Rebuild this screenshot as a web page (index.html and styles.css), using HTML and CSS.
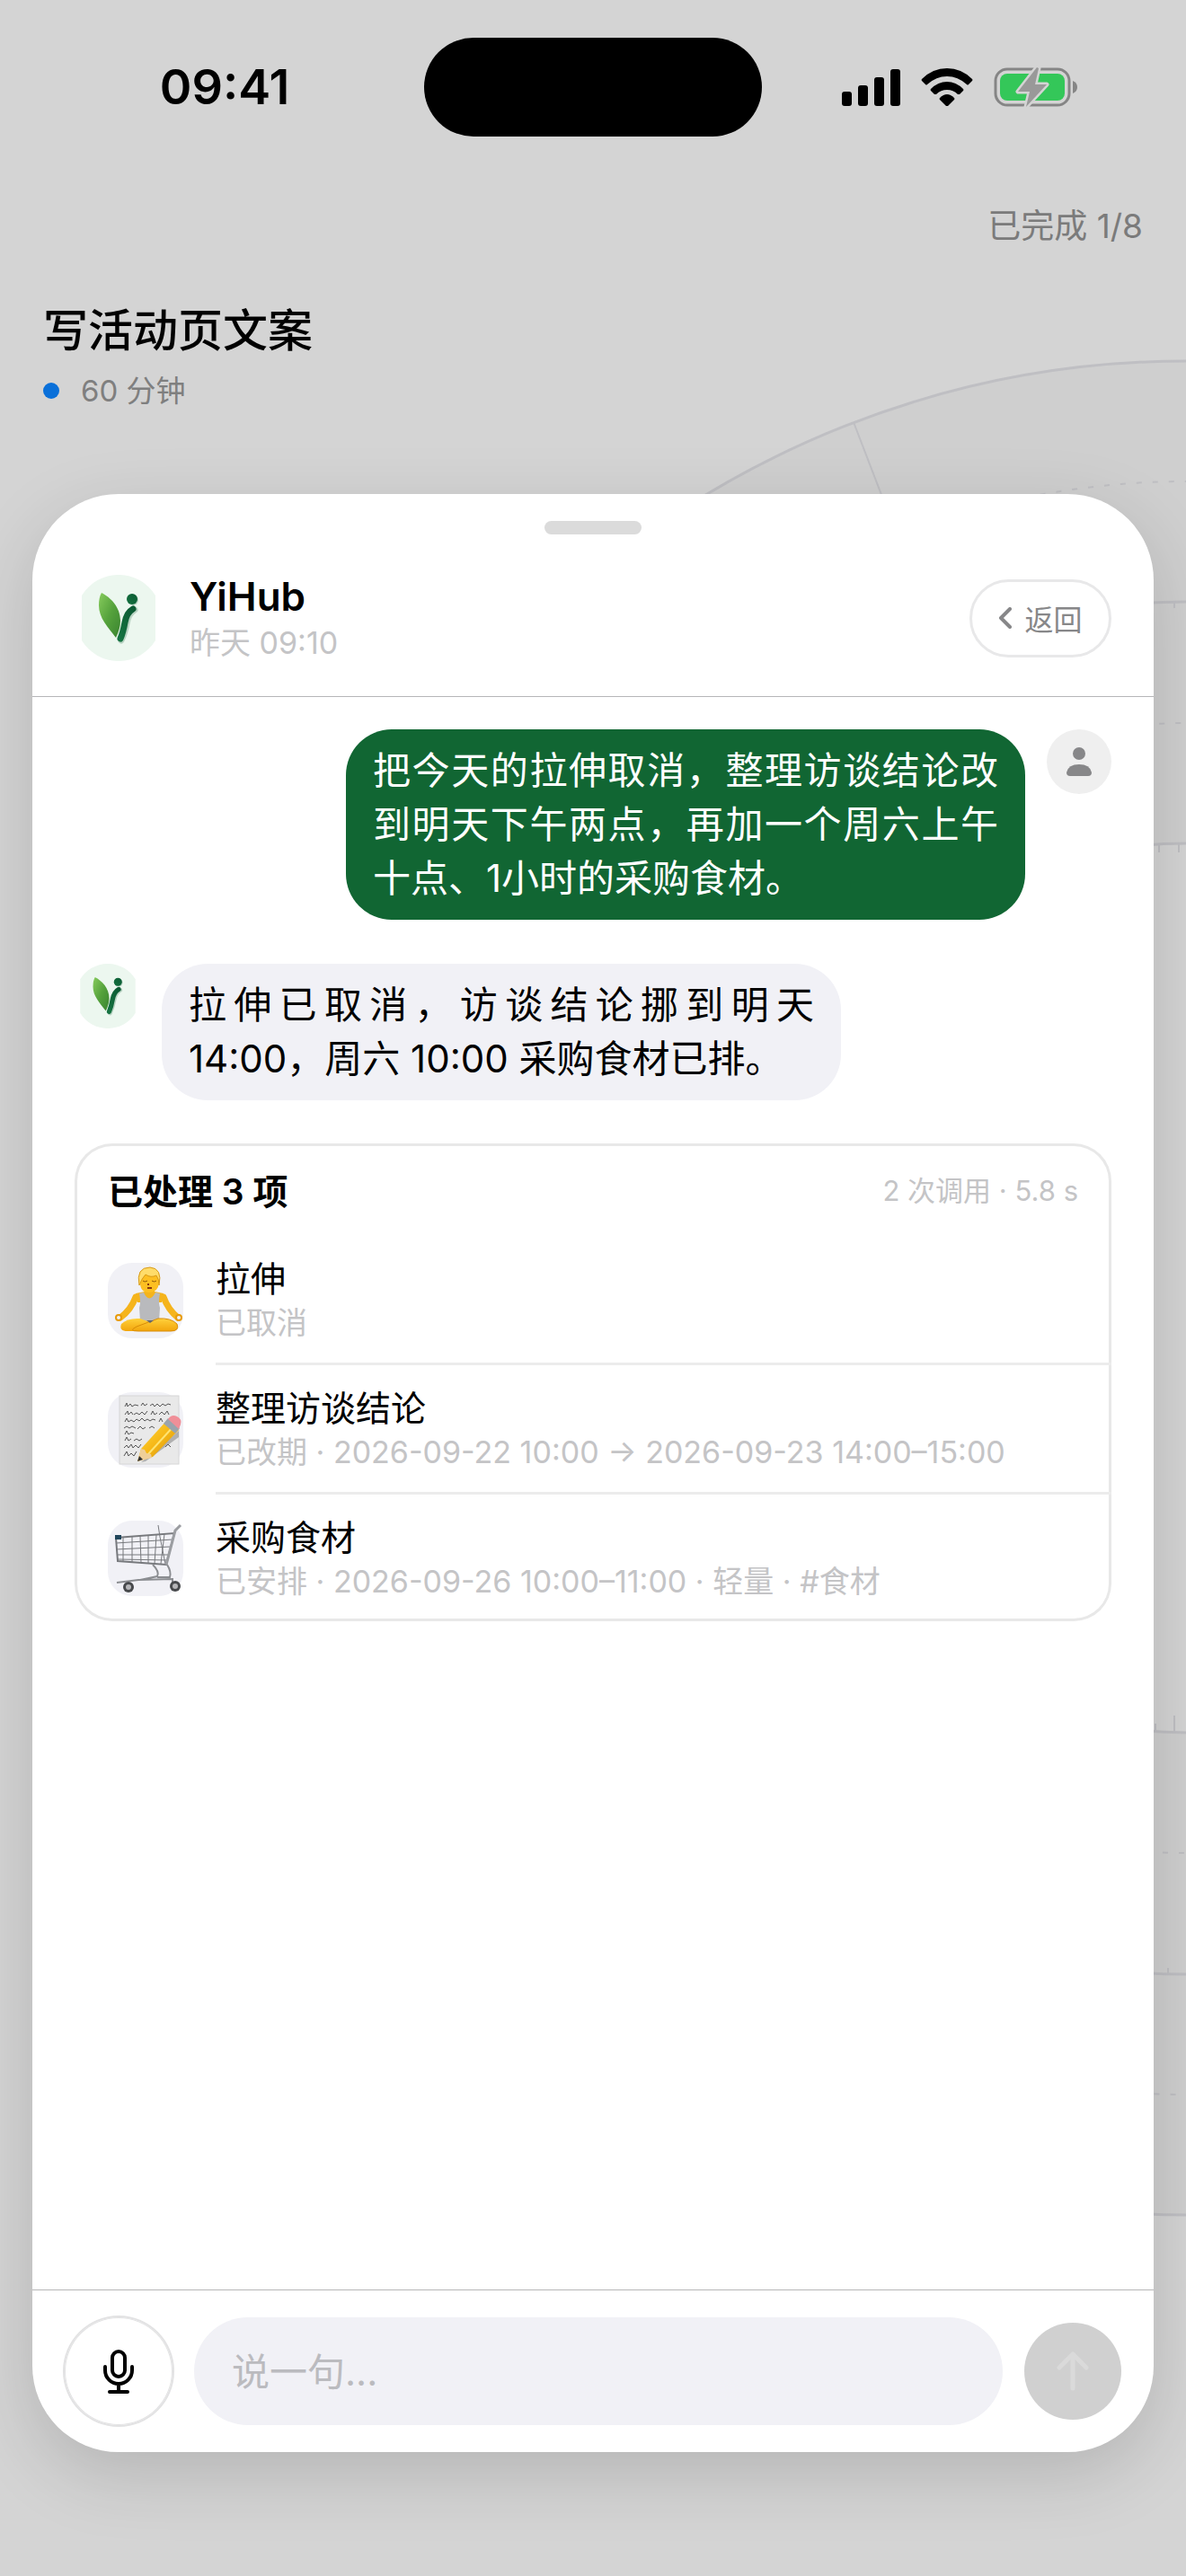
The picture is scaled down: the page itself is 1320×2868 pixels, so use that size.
FILE: index.html
```html
<!DOCTYPE html>
<html lang="zh-CN">
<head>
<meta charset="utf-8">
<meta name="viewport" content="width=device-width, initial-scale=1">
<title>YiHub</title>
<link rel="stylesheet" href="styles.css">
</head>
<body>
<svg class="defs" aria-hidden="true">
  <defs>
    <linearGradient id="leaf" x1="0" y1="0" x2="1" y2="1">
      <stop offset="0" stop-color="#86cb5c"/><stop offset="0.5" stop-color="#55a23c"/><stop offset="1" stop-color="#3a8430"/>
    </linearGradient>
    <linearGradient id="stem" x1="1" y1="0" x2="0" y2="1">
      <stop offset="0" stop-color="#0b5a33"/><stop offset="1" stop-color="#157341"/>
    </linearGradient>
    <linearGradient id="skin" x1="0" y1="0" x2="0" y2="1">
      <stop offset="0" stop-color="#ffd13b"/><stop offset="1" stop-color="#f2a50c"/>
    </linearGradient>
    <linearGradient id="pencil" x1="0" y1="0" x2="1" y2="1">
      <stop offset="0" stop-color="#ffdb45"/><stop offset="0.5" stop-color="#f6b817"/><stop offset="1" stop-color="#c98608"/>
    </linearGradient>
    <symbol id="logo" viewBox="0 0 82 96">
      <path fill="#ecf7ef" d="M0 23A48 48 0 0 1 82 23V73A48 48 0 0 1 0 73Z"/>
      <path fill="url(#leaf)" d="M22 20C32 25 43 36 43 51Q43 60 38 70C29 58 19 48 19 34Q19 25 22 20Z"/>
      <g fill="none" stroke="#b9d3c3" stroke-width="7" stroke-linecap="round" transform="translate(1 1)"><path d="M58 38Q51 42 49 53T43 72"/></g>
      <path d="M57 38Q50 42 48 53T43 71" fill="none" stroke="url(#stem)" stroke-width="7" stroke-linecap="round"/>
      <circle cx="57" cy="28" r="6" fill="#b9d3c3"/>
      <circle cx="56" cy="27" r="6" fill="url(#stem)"/>
    </symbol>
  </defs>
</svg>

<div class="screen">
  <header class="status">
    <div class="status-left"><time>09:41</time></div>
    <div class="island"></div>
    <div class="status-right">
      <svg width="65" height="41" viewBox="0 0 65 41" aria-hidden="true"><rect y="25" width="11" height="16" rx="3"/><rect x="18" y="18" width="11" height="23" rx="3"/><rect x="36" y="9" width="11" height="32" rx="3"/><rect x="54" width="11" height="41" rx="3"/></svg>
      <svg width="58" height="42" viewBox="0 0 58 42" aria-hidden="true"><path d="M1 12Q13 0 29 0T57 12Q58 13 57 14L53 18Q52 19 51 18Q41 9 29 9T7 18Q6 19 5 18L1 14Q0 13 1 12Z"/><path d="M11 23Q19 15 29 15T47 23Q48 24 47 25L43 29Q42 29 41 29Q36 24 29 24T17 29Q16 29 15 29L11 25Q10 24 11 23Z"/><path d="M21 33Q25 29 29 29T37 33Q38 34 37 35L30 42Q29 42 28 42L21 35Q20 34 21 33Z"/></svg>
      <svg width="94" height="46" viewBox="0 0 94 46" aria-hidden="true">
        <rect x="2" y="3" width="82" height="40" rx="13" fill="none" stroke="#858585" stroke-width="3"/>
        <path d="M88 16Q93 18 93 23T88 30Z" fill="#858585"/>
        <rect x="7" y="8" width="72" height="30" rx="8" fill="#34c759"/>
        <path d="M48 1L27 28H40L36 45L59 20H46L50 2Z" fill="#999" stroke="#d4d4d4" stroke-width="5" stroke-linejoin="round" paint-order="stroke"/>
      </svg>
    </div>
  </header>

  <main class="day">
    <svg class="dial" viewBox="287 400 1033 2068" aria-hidden="true">
      <circle class="dial-band" cx="1320" cy="1434" r="764"/>
      <g class="dial-line">
        <circle cx="1320" cy="1434" r="1032"/>
        <circle cx="1320" cy="1434" r="764"/>
        <circle cx="1320" cy="1434" r="495"/>
        <path d="M950 470L1143 973"/>
        <path class="dial-tick" d="M1290 939V949M1312 939V949M1307 671V677M1286 1928V1919M1307 1928V1910M1300 2197V2191"/>
      </g>
      <g class="dial-dash">
        <circle cx="1320" cy="1434" r="898"/>
        <circle cx="1320" cy="1434" r="629"/>
      </g>
    </svg>
    <p class="progress">已完成 1/8</p>
    <h1 class="task">写活动页文案</h1>
    <p class="duration"><span class="dot"></span>60 分钟</p>
  </main>

  <section class="sheet" role="dialog" aria-label="YiHub">
    <div class="grabber"></div>
    <header class="sheet-head">
      <svg class="logo"><use href="#logo"/></svg>
      <div class="who">
        <h2>YiHub</h2>
        <p>昨天 09:10</p>
      </div>
      <button class="back" type="button">
        <svg width="15" height="24" viewBox="0 0 15 24" aria-hidden="true"><path d="M13 2L3 12L13 22" fill="none" stroke="currentColor" stroke-width="4" stroke-linecap="round" stroke-linejoin="round"/></svg>
        返回
      </button>
    </header>

    <div class="chat">
      <div class="msg mine">
        <p class="bubble">把今天的拉伸取消，整理访谈结论改到明天下午两点，再加一个周六上午十点、1小时的采购食材。</p>
        <span class="avatar"><svg width="28" height="32" viewBox="0 0 28 32" aria-hidden="true"><circle cx="14" cy="7" r="7"/><path d="M4 32Q0 32 0 28Q2 19 14 19T28 28Q28 32 24 32Z"/></svg></span>
      </div>
      <div class="msg">
        <svg class="logo-small"><use href="#logo"/></svg>
        <p class="bubble">拉伸已取消，访谈结论挪到明天14:00，周六 10:00 采购食材已排。</p>
      </div>

      <section class="card">
        <header class="card-head">
          <h3>已处理 3 项</h3>
          <span>2 次调用 · 5.8 s</span>
        </header>
        <ul class="items">
          <li>
            <span class="tile"><svg viewBox="0 0 84 84" aria-hidden="true">
              <path d="M31 38Q26 52 14 61M62 38Q67 52 78 61" fill="none" stroke="#f5b41c" stroke-width="7" stroke-linecap="round"/>
              <circle cx="12" cy="61" r="3" fill="#f1f1f6" stroke="#e89b0a" stroke-width="2"/><circle cx="79" cy="61" r="3" fill="#f1f1f6" stroke="#e89b0a" stroke-width="2"/>
              <path d="M41 27H52V38H41Z" fill="#eda414"/>
              <path d="M31 34L41 32H52L62 34L60 44H33Z" fill="#f5b41c"/>
              <path d="M35 34L40 33Q46 46 53 33L58 34Q56 44 58 50L57 65H36L35 50Q37 44 35 34Z" fill="#b9babd"/>
              <path d="M15 68Q22 61 36 62L58 70Q70 75 60 76H22Q12 76 15 68Z" fill="url(#skin)"/>
              <path d="M77 68Q70 61 56 62L32 71Q22 76 34 76H70Q80 76 77 68Z" fill="url(#skin)" stroke="#d88c08" stroke-width="1"/>
              <path d="M43 64H51L47 67Z" fill="#66686c"/>
              <path d="M36 16Q36 8 46 8T57 16V22Q56 33 46 33T36 22Z" fill="#fdbf22"/>
              <path d="M35 25Q31 5 47 5Q61 6 57 25Q57 18 54 14Q48 17 42 13Q38 17 35 25Z" fill="#ffdc6a" stroke="#d99a14" stroke-width="1"/>
              <path d="M39 20Q41 22 44 20M49 20Q52 22 54 20" fill="none" stroke="#8f5a0a" stroke-width="1"/><path d="M45 23V25M44 28H49" stroke="#8c3a10" stroke-width="2"/>
            </svg></span>
            <div class="item"><h4>拉伸</h4><p>已取消</p></div>
          </li>
          <li>
            <span class="tile"><svg viewBox="0 0 84 84" aria-hidden="true">
              <rect x="13" y="4" width="66" height="76" fill="#e9e9e9" stroke="#d6d6d6"/>
              <g fill="none" stroke="#555" stroke-width="1"><path d="M19 16l2-4 1 4 3-3 2 3 3-2 4 1M37 15l2-3 2 3 3-2M47 15l3-2 2 3 3-3 3 3 3-3 3 2 3-2 3 1"/><path d="M19 25l3-4 1 4 3-3 2 3M29 25l3-2 3 2 3-3 3 3 3-4M48 25l2-4 2 4 3-2M57 25l3-3 3 3 3-4 2 4"/><path d="M19 33l2-4 2 4 3-2 3 2 3-3 3 2 3-3 3 3 3-2 3 2 3-2 3 1M57 33l2-4 2 4"/><path d="M18 40l3-2 3 2 3-2 4 2M33 41l3-3 3 3 3-2M46 40l3-2 3 2"/><path d="M19 47l2-4 2 4 3-2 3 1"/><path d="M19 54l2-4 2 4 3-2M29 54l3-2 3 2 3-2"/><path d="M18 62l3-3 2 3 3-4 2 4 3-3 3 3 3-4M64 61l3-3 3 3"/><path d="M18 71l3-5 2 5 3-3 3 3 3-5"/></g>
              <path d="M37 78L79 43V50L42 77Z" fill="#777" opacity=".5"/>
              <path d="M33 77L37 63L66 31L79 42L50 72Z" fill="url(#pencil)"/>
              <path d="M44 70L74 37" stroke="#ffe472" stroke-width="2"/>
              <path d="M33 77L37 63L41 64L43 68L48 69L49 73Z" fill="#efcf98"/><path d="M33 77L35 71L39 75Z" fill="#333"/>
              <path d="M62 35L67 29L80 40L75 46Z" fill="#9aa4ad"/>
              <path d="M67 30Q71 24 77 27T81 36L79 41Z" fill="#f08f98"/>
            </svg></span>
            <div class="item"><h4>整理访谈结论</h4><p>已改期 · 2026-09-22 10:00 → 2026-09-23 14:00–15:00</p></div>
          </li>
          <li>
            <span class="tile"><svg viewBox="0 0 84 84" aria-hidden="true">
              <g fill="none" stroke="#77797d" stroke-width="1"><path d="M9 19L74 14L65 49L11 45Z" stroke-width="2"/><path d="M9 25L72 21M9 32L70 29M10 38L68 38M11 43L67 44M17 19V46M27 18V46M36 17L37 47M45 16V47M54 16L52 48M63 15L59 48"/><path d="M56 5L58 18L64 48"/></g>
              <path d="M81 5L75 11L65 49" fill="none" stroke="#9b9da1" stroke-width="3"/>
              <path d="M50 49Q58 57 55 62L36 66M66 49Q71 57 69 63H55M10 69L34 66L72 65V70" fill="none" stroke="#8b8d91" stroke-width="2"/>
              <rect x="8" y="16" width="7" height="5" fill="#21465b"/>
              <circle cx="23" cy="74" r="6" fill="#47494c"/><circle cx="23" cy="74" r="3" fill="#b5b5b8"/>
              <circle cx="75" cy="73" r="6" fill="#47494c"/><circle cx="75" cy="73" r="3" fill="#b5b5b8"/>
            </svg></span>
            <div class="item"><h4>采购食材</h4><p>已安排 · 2026-09-26 10:00–11:00 · 轻量 · #食材</p></div>
          </li>
        </ul>
      </section>
    </div>

    <form class="composer">
      <button class="mic" type="button" aria-label="语音">
        <svg width="34" height="50" viewBox="0 0 34 50" aria-hidden="true"><g fill="none" stroke="#000" stroke-width="4" stroke-linecap="round"><rect x="10" y="3" width="14" height="28" rx="7"/><path d="M2 20V24A15 15 0 0 0 32 24V20M17 39V47M7 48H27"/></g></svg>
      </button>
      <input class="say" type="text" placeholder="说一句..." aria-label="说一句">
      <button class="send" type="submit" aria-label="发送" disabled>
        <svg width="36" height="44" viewBox="0 0 36 44" aria-hidden="true"><path d="M18 41V4M3 18L18 3L33 18" fill="none" stroke="#dadada" stroke-width="5" stroke-linecap="round" stroke-linejoin="round"/></svg>
      </button>
    </form>
  </section>
</div>
</body>
</html>
```

FILE: styles.css
```css
* { box-sizing: border-box; }

body, h1, h2, h3, h4, p, ul { margin: 0; padding: 0; }

body {
  background: #d4d4d4;
  color: #000;
  font-family: Inter, "Noto Sans CJK SC", sans-serif;
}

button, input { font: inherit; border: 0; padding: 0; margin: 0; }

.defs { position: absolute; width: 0; height: 0; }

.screen {
  position: relative;
  min-height: 100vh;
  overflow: hidden;
}

/* Status bar */
.status {
  display: grid;
  grid-template-columns: 1fr 376px 1fr;
  align-items: center;
  padding: 42px 0 0;
}
.status-left {
  padding-left: 28px;
  text-align: center;
  font-size: 54px;
  line-height: 60px;
  font-weight: 600;
}
.island { height: 110px; border-radius: 55px; background: #000; }
.status-right {
  display: flex;
  align-items: center;
  justify-content: center;
  gap: 23px;
  padding-right: 32px;
}

/* Day view behind the sheet */
.day { padding: 72px 48px 0; }
.dial {
  position: absolute;
  top: 400px;
  right: 0;
  width: 1033px;
  height: 2068px;
}
.dial-band { fill: none; stroke: #cfcfcf; stroke-width: 537px; }
.dial-line { fill: none; stroke: #bfbfc3; stroke-width: 3px; }
.dial-line path { stroke-width: 2px; }
.dial-dash { fill: none; stroke: #bfbfc3; stroke-width: 2px; stroke-dasharray: 6 12; }
.progress {
  position: relative;
  text-align: right;
  font-size: 37px;
  line-height: 56px;
  color: #7b7b7b;
}
.task {
  position: relative;
  margin-top: 52px;
  font-size: 50px;
  line-height: 72px;
  font-weight: 500;
}
.duration {
  position: relative;
  display: flex;
  align-items: center;
  gap: 24px;
  margin-top: 7px;
  font-size: 33px;
  line-height: 48px;
  color: #7f7f7f;
}
.dot { width: 18px; height: 18px; border-radius: 50%; background: #0a70d9; }

/* Conversation sheet */
.sheet {
  position: absolute;
  inset: 550px 36px 138px;
  display: flex;
  flex-direction: column;
  border-radius: 96px;
  background: #fff;
  box-shadow: 0 24px 80px rgba(0, 0, 0, .15);
}
.grabber {
  width: 108px;
  height: 15px;
  margin: 30px auto 0;
  border-radius: 8px;
  background: #dbdbdb;
}
.sheet-head {
  display: flex;
  align-items: center;
  height: 181px;
  padding: 6px 47px 0 55px;
  border-bottom: 1px solid #b6b6b8;
}
.logo { width: 82px; height: 96px; }
.who { flex: 1; padding-left: 38px; }
.who h2 { font-size: 44px; line-height: 56px; font-weight: 600; }
.who p { font-size: 34px; line-height: 48px; color: #c4c4c6; }
.back {
  display: flex;
  align-items: center;
  justify-content: center;
  gap: 14px;
  width: 158px;
  height: 87px;
  border: 3px solid #e8e8e9;
  border-radius: 44px;
  background: #fff;
  color: #878789;
  font-size: 32px;
}

/* Messages */
.chat {
  flex: 1;
  padding: 36px 47px 0;
}
.msg {
  display: flex;
  align-items: flex-start;
  gap: 29px;
  margin-bottom: 48px;
  padding-left: 6px;
}
.mine { justify-content: flex-end; gap: 24px; margin-bottom: 49px; }
.bubble {
  width: 756px;
  padding: 16px 30px;
  border-radius: 51px;
  background: #f1f1f6;
  font-size: 42px;
  line-height: 60px;
  text-align: justify;
}
.mine .bubble { background: #116633; color: #fff; }
.avatar {
  display: flex;
  align-items: center;
  justify-content: center;
  width: 72px;
  height: 72px;
  border-radius: 50%;
  background: #efefef;
  fill: #878789;
}
.logo-small { width: 62px; height: 72px; }

/* Result card */
.card {
  border-radius: 42px;
  box-shadow: inset 0 0 0 3px #e8e8e8;
}
.card-head {
  display: flex;
  align-items: center;
  justify-content: space-between;
  height: 103px;
  padding: 0 37px 2px;
}
.card-head h3 { font-size: 39px; font-weight: 600; }
.card-head span { font-size: 31px; color: #c4c4c6; }
.items { list-style: none; }
.items li {
  display: flex;
  align-items: center;
  gap: 36px;
  padding-left: 37px;
}
.tile {
  width: 84px;
  height: 84px;
  border-radius: 27px;
  background: #f1f1f6;
}
.tile svg { display: block; }
.item {
  flex: 1;
  display: flex;
  flex-direction: column;
  gap: 4px;
  padding: 24px 0 23px;
  border-bottom: 3px solid #ececec;
}
.items li:last-child .item { border-bottom: 0; }
.item h4 { font-size: 39px; line-height: 48px; font-weight: 400; }
.item p { font-size: 34px; line-height: 42px; color: #c4c4c6; }

/* Composer */
.composer {
  display: flex;
  align-items: center;
  gap: 24px;
  padding: 30px 36px;
  border-top: 1px solid #b6b6b8;
}
.mic, .send {
  display: flex;
  align-items: center;
  justify-content: center;
  flex: none;
  border-radius: 50%;
}
.mic {
  width: 120px;
  height: 120px;
  background: #fff;
  box-shadow: 0 0 0 2px #e2e2e3, inset 0 0 0 1px #e2e2e3;
}
.say {
  flex: 1;
  min-width: 0;
  height: 120px;
  padding: 0 42px;
  border-radius: 60px;
  background: #f1f1f6;
  font-size: 42px;
}
.say::placeholder { color: #bbbbbf; }
.send { width: 108px; height: 108px; background: #d0d0d0; }
```
